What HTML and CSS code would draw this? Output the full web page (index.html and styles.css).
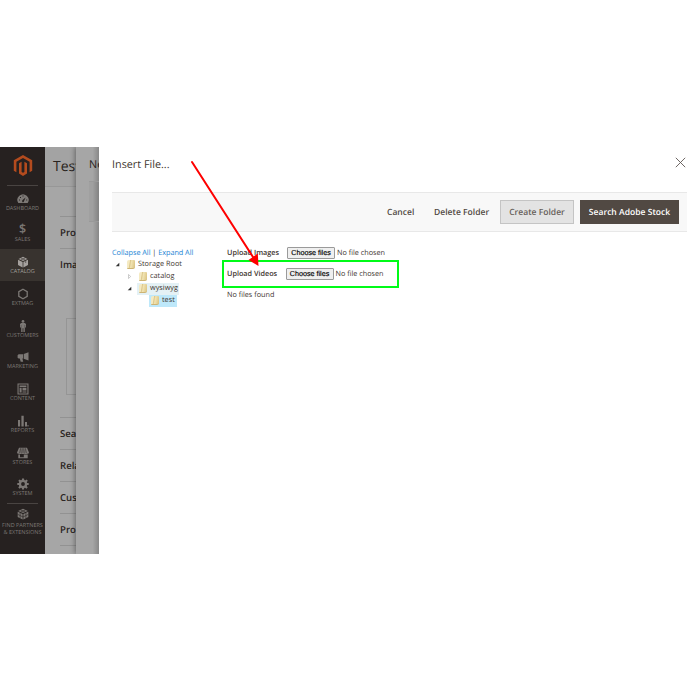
FILE: index.html
```html
<!DOCTYPE html>
<html lang="en">
<head>
<meta charset="utf-8">
<title>Insert File</title>
<link rel="stylesheet" href="styles.css">
</head>
<body>
<div class="app">
  <nav class="menu">
    <div class="logo"><svg width="20" height="22" viewBox="0 0 20 22" fill="#b34b1e"><path d="M10 0 19.2 5.3V15.8L16.6 17.3V6.8L10 3 3.4 6.8V17.3L.8 15.8V5.3Z"/><path d="M6 8.2 8.6 6.7V17L10 17.8 11.4 17V6.7L14 8.2V18.5L10 20.9 6 18.5Z"/></svg></div>
    <a class="item"><svg viewBox="0 0 12 12"><path fill-rule="evenodd" d="M1.3 10A5.6 5.6 0 1 1 10.7 10ZM5.2 8.7A1.1 1.1 0 0 0 7 8.3L8.6 4.5 5.3 7.2ZM2 6.5v1h1v-1ZM3 4v1h1V4ZM5.5 2.6v1h1v-1ZM9.2 6.5v1h1v-1Z"/></svg><span>DASHBOARD</span></a>
    <a class="item"><b class="dollar">$</b><span>SALES</span></a>
    <a class="item active"><svg viewBox="0 0 12 12"><path d="M6 .7 10.4 2.9 6 5.1 1.6 2.9Z"/><path d="M1 3.8 5.6 6.1V11.4L1 9Z"/><path d="M11 3.8 6.4 6.1V11.4L11 9Z"/><path class="cut" d="M3.8 1.9 8.3 4.1M8.2 1.9 3.7 4.1M8.7 5v2"/></svg><span>CATALOG</span></a>
    <a class="item"><svg viewBox="0 0 12 12"><path class="line" d="M6 1.2 10.2 3.6V8.4L6 10.8 1.8 8.4V3.6Z"/></svg><span>EXTMAG</span></a>
    <a class="item"><svg viewBox="0 0 12 12"><circle cx="6" cy="1.4" r="1.4"/><path d="M4.2 3.1H7.8L9 4V7.6H8.1V5H7.8V12H6.4V8.2H5.6V12H4.2V5H3.9V7.6H3V4Z"/></svg><span>CUSTOMERS</span></a>
    <a class="item"><svg viewBox="0 0 12 12"><path d="M11.5 1.2V9.6L6.7 7.8V3.1ZM6 3.3V7.6H5.4L6.2 10.8H3.7L2.8 7.6H1.6L.6 6.7V4.3L1.6 3.3Z"/></svg><span>MARKETING</span></a>
    <a class="item"><svg viewBox="0 0 12 12"><path fill-rule="evenodd" d="M.5.5h11v11H.5ZM1.6 1.6v8.8h8.8V1.6Z"/><path d="M2.6 2.6h6.8v1.3H2.6ZM2.6 4.8h2v4.6h-2ZM5.5 4.8h3.9v2.8H5.5ZM5.5 8.5h3.9v.9H5.5Z"/></svg><span>CONTENT</span></a>
    <a class="item"><svg viewBox="0 0 12 12"><path d="M1 5h2.1v6.5H1ZM4.4.8h2.3v10.7H4.4ZM8 7h2v4.5H8ZM10.5 10h1v1.5h-1Z"/></svg><span>REPORTS</span></a>
    <a class="item"><svg viewBox="0 0 12 12"><path d="M2 .8H10L12 5.5Q11.8 7 10.3 6.7 8.8 7.5 7.5 6.7 6 7.5 4.5 6.7 3.2 7.5 1.7 6.7.2 7 0 5.5ZM1.3 7.6H3V11.3H1.3ZM3 10.3H6.8V11.3H3ZM6.8 7.6H10.7V11.3H6.8Z"/><path class="cut" d="M3.6 1.3 2.7 6.2M5.2 1.3 4.9 6.2M6.8 1.3 7.1 6.2M8.4 1.3 9.3 6.2"/></svg><span>STORES</span></a>
    <a class="item"><svg viewBox="0 0 12 12"><path fill-rule="evenodd" d="M5 .4H7L7.3 2 8.2 2.4 9.6 1.4 10.8 2.7 9.8 4 10.1 4.9 11.7 5.1V6.9L10.1 7.1 9.8 8 10.7 9.4 9.4 10.7 8.1 9.7 7.2 10.1 7 11.6H5L4.8 10.1 3.9 9.7 2.6 10.7 1.3 9.4 2.2 8 1.9 7.1.3 6.9V5.1L1.9 4.9 2.2 4 1.3 2.7 2.6 1.4 3.9 2.3 4.8 1.9ZM6 4.1A1.9 1.9 0 1 0 6 7.9 1.9 1.9 0 1 0 6 4.1Z"/></svg><span>SYSTEM</span></a>
    <a class="item partners"><svg viewBox="0 0 12 12"><path d="M6 .7 10.9 2.9 6 5.1 1.1 2.9Z"/><path d="M.7 3.7 5.6 6V11.4L.7 9Z"/><path d="M11.3 3.7 6.4 6V11.4L11.3 9Z"/><path class="cut" d="M3.5 1.9 8.5 4.1M8.5 1.9 3.5 4.1M3.1 5v5.5M8.9 5v5.5M.7 6.4 6 9 11.3 6.4"/></svg><span>FIND PARTNERS<br>&amp; EXTENSIONS</span></a>
  </nav>
  <main class="page">
    <h1>Test</h1>
    <div class="sections">
      <section class="row">Pro</section>
      <section class="row images">Ima<div class="drop"></div></section>
      <section class="row">Sea</section>
      <section class="row">Rela</section>
      <section class="row">Cus</section>
      <section class="row">Pro</section>
      <section class="row"></section>
    </div>
  </main>
  <aside class="under">
    <h2>Ne</h2>
    <div class="under-bar"></div>
  </aside>
  <div class="modal">
    <header class="head"><h2>Insert File...</h2><svg width="11" height="11" viewBox="0 0 11 11" fill="none" stroke="#5d5652" stroke-width=".9"><path d="M.8.8 10.2 10.2M10.2.8.8 10.2"/></svg></header>
    <div class="toolbar">
      <button class="plain cancel">Cancel</button>
      <button class="plain delete">Delete Folder</button>
      <button class="create">Create Folder</button>
      <button class="stock">Search Adobe Stock</button>
    </div>
    <div class="content">
      <div class="tree">
        <div class="links"><a>Collapse All</a> | <a>Expand All</a></div>
        <div class="node"><svg class="arrow" viewBox="0 0 5 5"><path d="M4.3.7V4.3H.7Z" fill="#333"/></svg><span class="label"><i class="folder"></i>Storage Root</span></div>
        <div class="node l1"><svg class="arrow" viewBox="0 0 5 5"><path d="M1.5.5 3.7 2.5 1.5 4.5Z" fill="none" stroke="#aaa" stroke-width=".6"/></svg><span class="label"><i class="folder"></i>catalog</span></div>
        <div class="node l1"><svg class="arrow" viewBox="0 0 5 5"><path d="M4.3.7V4.3H.7Z" fill="#333"/></svg><span class="label over"><i class="folder"></i>wysiwyg</span></div>
        <div class="node l2"><span class="label selected"><i class="folder"></i>test</span></div>
      </div>
      <div class="files">
        <div class="upload images-line"><b>Upload Images</b><button class="choose">Choose files</button><span>No file chosen</span></div>
        <div class="upload videos-line"><b>Upload Videos</b><button class="choose">Choose files</button><span>No file chosen</span></div>
        <p>No files found</p>
      </div>
    </div>
  </div>
  <svg class="pointer" width="72" height="110" viewBox="0 0 72 110"><path d="M2 2 63 97" stroke="#fe0000" stroke-width="2" stroke-linecap="round"/><path d="M68.5 106 58.5 100 67.8 93.5Z" fill="#fe0000"/></svg>
</div>
</body>
</html>
```
FILE: styles.css
```css
* { box-sizing: border-box; }
body { margin: 0; padding-top: 147px; background: #fff; font-family: "Open Sans", sans-serif; color: #41362f; text-rendering: geometricPrecision; }
h1, h2, p { margin: 0; font-weight: 400; }
button { font-family: inherit; margin: 0; padding: 0; white-space: nowrap; text-rendering: inherit; }
.app { position: relative; display: flex; width: 700px; height: 407px; overflow: hidden; }

.menu { flex: 0 0 45px; background: #262120; color: #7c7875; }
.logo { height: 38.6px; margin: 0 7px; padding-top: 8px; border-bottom: 1px solid #494442; text-align: center; line-height: 0; }
.item { height: 31.75px; display: flex; flex-direction: column; align-items: center; padding-top: 7px; font-size: 5.5px; line-height: 7px; white-space: nowrap; }
.item svg { width: 12px; height: 12px; fill: #7c7875; overflow: visible; }
.item .line { fill: none; stroke: #7c7875; stroke-width: 1.3; }
.item .cut { fill: none; stroke: #262120; stroke-width: .6; }
.dollar { height: 12px; line-height: 10px; font-size: 12.5px; font-weight: 600; color: #7c7875; }
.active { background: #38332f; color: #a5a19e; }
.active svg { fill: #a5a19e; }
.active .cut { stroke: #38332f; }
.item.partners { position: relative; height: auto; padding-top: 5px; line-height: 6.9px; text-align: center; gap: 2px; }
.partners::before { content: ""; position: absolute; top: 0; left: 7px; right: 7px; border-top: 1px solid #494442; }

.page { flex: 0 0 31px; background: #a6a6a6; overflow: hidden; color: #292320; }
.page h1 { height: 39.5px; padding-left: 8px; font-size: 14px; line-height: 39px; background: #a3a3a3; border-bottom: 1px solid #979797; }
.sections { margin: 29px 0 0 15px; }
.row { height: 32.2px; border-top: 1px solid #929292; font-size: 9.6px; font-weight: 600; line-height: 31px; }
.images { height: 169px; }
.drop { margin: 38px 0 0 6px; width: 60px; height: 77px; border: 1px solid #959595; }

.under { flex: 0 0 23px; background: linear-gradient(90deg, transparent 72%, rgba(0,0,0,.18)), #a6a6a6; overflow: hidden; box-shadow: -1px 0 5px rgba(0,0,0,.38); color: #292320; clip-path: inset(0 0 0 -8px); }
.under h2 { height: 34px; padding-left: 13px; font-size: 10.8px; line-height: 35px; }
.under-bar { height: 41px; margin-left: 13px; background: rgba(0,0,0,.035); border: solid #999; border-width: 1px 0; }

.modal { position: relative; flex: 1; padding: 0 13px; background: #fff; }
.head { height: 45px; display: flex; justify-content: space-between; padding-top: 10px; }
.head h2 { font-size: 10.8px; line-height: 15px; }
.head svg { margin-right: 1px; }
.toolbar { height: 40px; display: flex; align-items: center; justify-content: flex-end; padding-right: 8px; background: #f8f8f8; border: solid #e8e8e8; border-width: 1px 0; }
.toolbar button { height: 24px; border: 1px solid transparent; font-size: 8.55px; font-weight: 600; line-height: 22px; color: #514943; }
.toolbar .plain { background: none; }
.toolbar .cancel { width: 28px; margin-right: 19px; }
.toolbar .delete { width: 56px; margin-right: 11px; }
.toolbar .create { width: 74px; margin-right: 6px; background: #e3e3e3; border-color: #c4c4c4; color: #665e59; }
.toolbar .stock { width: 99px; background: #514943; border-color: #514943; color: #fff; }

.content { display: flex; }
.tree { width: 115px; padding-top: 16px; font-size: 7.3px; line-height: 11px; white-space: nowrap; }
.links { height: 10.3px; letter-spacing: -.04px; }
.links a { color: #1b84d4; }
.node { height: 12.2px; display: flex; align-items: center; padding-left: 3px; }
.l1 { padding-left: 15px; }
.l2 { padding-left: 37px; }
.arrow { width: 5px; height: 5px; margin-right: 5px; }
.label { height: 12px; display: flex; align-items: center; padding: 0 1px 0 2px; }
.folder { width: 8px; height: 9px; margin-right: 3px; border-radius: 2px 1px 2px 1px; background: linear-gradient(100deg, #f5eac2 0 28%, #dcc78c 38%, #f1e4b3 52%, #d9c17f); border-bottom: 1px solid #cdb474; }
.over { background: #e4f1f5; }
.selected { background: #bee8fa; padding-right: 2px; }

.files { padding-top: 13px; font-size: 7.25px; color: #41362f; }
.upload { display: flex; align-items: center; white-space: nowrap; }
.upload b { width: 60px; font-weight: 600; }
.images-line { height: 15px; }
.videos-line { height: 28px; width: 177px; margin: 0 0 0 -5px; padding-left: 3px; border: 2px solid #00fb18; }
.videos-line b { width: 58.5px; }
.choose { width: 48px; height: 12px; margin-right: 2px; border: 1px solid #9a9a9a; border-radius: 1px; background: #efefef; color: #000; font: 7.2px/10px "Liberation Sans", sans-serif; -webkit-text-stroke: .15px #000; }
.files p { margin-top: 1px; line-height: 12px; }

.pointer { position: absolute; left: 190px; top: 13px; }
```
